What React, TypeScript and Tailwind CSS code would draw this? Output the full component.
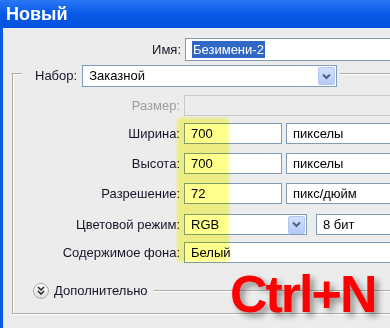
import React from "react";

const ui = { fontFamily: '"Liberation Sans", Arial, sans-serif' };

function Chevron() {
  return (
    <div className="w-[17px] h-[18px] shrink-0 rounded-[2px] border border-[#b3c6ef] bg-gradient-to-b from-[#d3e0fb] to-[#b5cbf6] flex items-center justify-center">
      <svg width="9" height="7" viewBox="0 0 9 7">
        <path d="M1 1.5 L4.5 5 L8 1.5" fill="none" stroke="#4d6185" strokeWidth="2" />
      </svg>
    </div>
  );
}

function Box({ children, w, h = 21, select = false }: { children?: React.ReactNode; w: number; h?: number; select?: boolean }) {
  return (
    <div
      className="border border-[#7f9db9] bg-white flex items-center pl-[6px] pr-[1px] text-[13px] text-black shrink-0"
      style={{ width: w, height: h }}
    >
      <span className="flex-1 whitespace-nowrap">{children}</span>
      {select && <Chevron />}
    </div>
  );
}

function Row({ label, children, mt, gray = false }: { label: string; children: React.ReactNode; mt: number; gray?: boolean }) {
  return (
    <div className="flex items-center" style={{ marginTop: mt }}>
      <div className={`w-[167px] shrink-0 whitespace-nowrap text-right text-[13px] ${gray ? "text-[#9c9c9c]" : "text-[#15152a]"}`}>{label}</div>
      <div className="ml-[4px] flex items-center shrink-0">{children}</div>
    </div>
  );
}

export default function App() {
  return (
    <div className="relative w-[390px] h-[328px] overflow-hidden bg-[#ececec]" style={ui}>
      <div className="h-[28px] bg-gradient-to-b from-[#2a78f5] via-[#0658e6] to-[#0553df] flex items-center pl-[6px]">
        <span className="text-white font-bold text-[18px] leading-none">Новый</span>
      </div>
      <div className="border-l-[3px] border-[#0a5be4] h-[300px] w-[460px] flex flex-col">
        <div className="flex items-center mt-[10px]">
          <div className="w-[178px] shrink-0 text-right text-[13px] text-[#15152a]">Имя:</div>
          <div className="ml-[4px] shrink-0">
            <Box w={260} h={23}>
              <span className="bg-[#3168c6] text-white px-[1px] py-[1px]">Безимени-2</span>
            </Box>
          </div>
        </div>
        <div className="ml-[9px] mt-[12px] w-[420px] h-[241px] border border-[#aeaca2] shadow-[inset_1px_1px_0_#ffffff,1px_1px_0_#ffffff]">
          <div className="flex items-center -mt-[9px] ml-[9px] w-[318px] bg-[#ececec] h-[22px]">
            <span className="ml-[13px] text-[13px] text-[#15152a]">Набор:</span>
            <div className="ml-[5px] shrink-0">
              <Box w={255} h={22} select>
                Заказной
              </Box>
            </div>
          </div>
          <Row label="Размер:" mt={8} gray>
            <div className="w-[260px] h-[21px] border border-[#c9c9c9] bg-[#ececec]" />
          </Row>
          <Row label="Ширина:" mt={7}>
            <Box w={98}>700</Box>
            <div className="ml-[4px]">
              <Box w={140}>пикселы</Box>
            </div>
          </Row>
          <Row label="Высота:" mt={9}>
            <Box w={98}>700</Box>
            <div className="ml-[4px]">
              <Box w={140}>пикселы</Box>
            </div>
          </Row>
          <Row label="Разрешение:" mt={9}>
            <Box w={98}>72</Box>
            <div className="ml-[4px]">
              <Box w={140}>пикс/дюйм</Box>
            </div>
          </Row>
          <Row label="Цветовой режим:" mt={10}>
            <Box w={123} select>
              RGB
            </Box>
            <div className="ml-[9px]">
              <Box w={140}>8 бит</Box>
            </div>
          </Row>
          <Row label="Содержимое фона:" mt={7}>
            <Box w={260}>Белый</Box>
          </Row>
          <div className="flex items-center mt-[18px] ml-[20px]">
            <div className="w-[16px] h-[16px] shrink-0 rounded-full border border-[#a9a9a9] bg-gradient-to-b from-white to-[#dcdcdc] flex items-center justify-center">
              <svg width="8" height="9" viewBox="0 0 8 9">
                <path d="M1 1 L4 4 L7 1 M1 5 L4 8 L7 5" fill="none" stroke="#222" strokeWidth="1.5" />
              </svg>
            </div>
            <span className="ml-[5px] text-[13px] text-[#15152a]">Дополнительно</span>
            <div className="ml-[6px] flex-1 h-0 border-t border-[#aeaca2] shadow-[0_1px_0_#fff]" />
          </div>
        </div>
      </div>
      {/* highlighter overlay */}
      <div className="absolute left-[177px] top-[118px] w-[52px] h-[144px] bg-[#ffff00]/45 mix-blend-multiply blur-[1.5px] rounded-[3px]" />
      {/* Ctrl+N */}
      <div
        className="absolute left-[230px] top-[268px] text-[52px] leading-none font-bold text-[#ff0000] tracking-[-2px]"
        style={{ textShadow: "4px 4px 6px rgba(0,0,0,0.4)" }}
      >
        Ctrl+N
      </div>
    </div>
  );
}
